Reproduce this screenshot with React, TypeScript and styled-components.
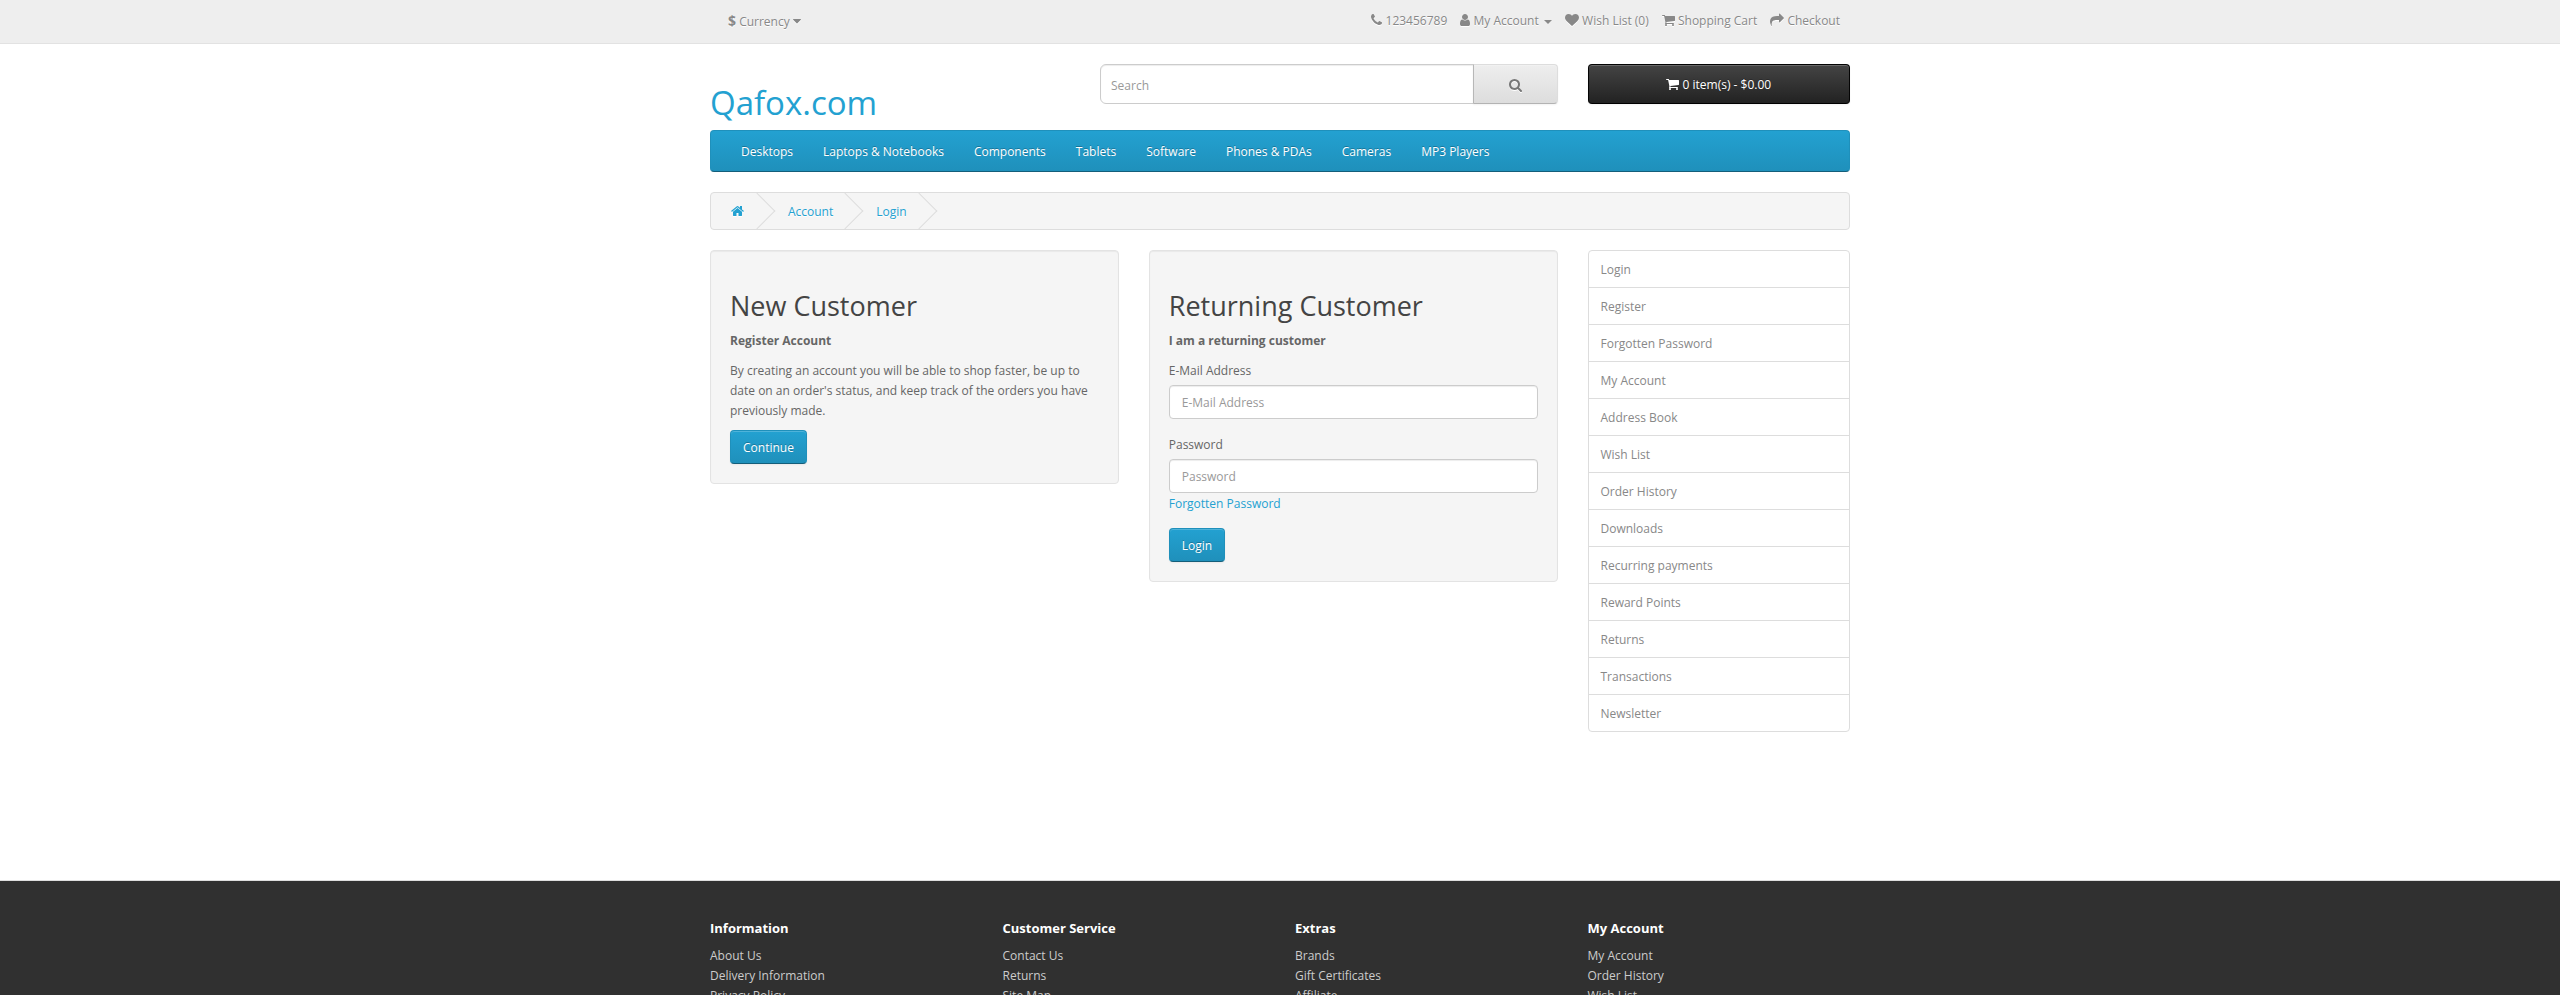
import React from 'react';
import styled, { createGlobalStyle, css } from 'styled-components';

const GlobalStyle = createGlobalStyle`
  *, *::before, *::after { box-sizing: border-box; }
  html, body { margin: 0; padding: 0; height: 995px; overflow: hidden; background: #fff; }
  body, input, button {
    font-family: 'Open Sans', sans-serif;
    font-size: 12px;
    font-weight: 400;
    line-height: 20px;
    color: #666;
  }
  ul { list-style: none; margin: 0; padding: 0; }
  a { color: #23a1d1; text-decoration: none; }
`;

/* Icons: drawn on a 1792 unit em square, cropped to their advance width. */
const glyphs = {
  home: {
    width: 1664,
    d: 'M1472 992v480q0 26-19 45t-45 19h-384v-384h-256v384h-384q-26 0-45-19t-19-45v-480q0-1 .5-3t.5-3l575-474 575 474q1 2 1 6zm223-69l-62 74q-8 9-21 11h-3q-13 0-21-7l-692-577-692 577q-12 8-24 7-13-2-21-11l-62-74q-8-10-7-23.5t11-21.5l719-599q32-26 76-26t76 26l244 204v-195q0-14 9-23t23-9h192q14 0 23 9t9 23v408l219 182q10 8 11 21.5t-7 23.5z',
  },
  search: {
    width: 1664,
    d: 'M1216 832q0-185-131.5-316.5t-316.5-131.5-316.5 131.5-131.5 316.5 131.5 316.5 316.5 131.5 316.5-131.5 131.5-316.5zm512 832q0 52-38 90t-90 38q-54 0-90-38l-343-342q-179 124-399 124-143 0-273.5-55.5t-225-150-150-225-55.5-273.5 55.5-273.5 150-225 225-150 273.5-55.5 273.5 55.5 225 150 150 225 55.5 273.5q0 220-124 399l343 343q37 37 37 90z',
  },
  phone: {
    width: 1408,
    d: 'M1600 1240q0 27-10 70.5t-21 68.5q-21 50-122 106-94 51-186 51-27 0-52.5-3.5t-57.5-12.5-47.5-14.5-55.5-20.5-49-18q-98-35-175-83-128-79-264.5-215.5t-215.5-264.5q-48-77-83-175-3-9-18-49t-20.5-55.5-14.5-47.5-12.5-57.5-3.5-52.5q0-92 51-186 56-101 106-122 25-11 68.5-21t70.5-10q14 0 21 3 18 6 53 76 11 19 30 54t35 63.5 31 53.5q3 4 17.5 25t21.5 35.5 7 28.5q0 20-28.5 50t-62 55-62 53-28.5 46q0 9 5 22.5t8.5 20.5 14 24 11.5 19q76 137 174 235t235 174q2 1 19 11.5t24 14 20.5 8.5 22.5 5q18 0 46-28.5t53-62 55-62 50-28.5q14 0 28.5 7t35.5 21.5 25 17.5q25 15 53.5 31t63.5 35 54 30q70 35 76 53 3 7 3 21z',
  },
  user: {
    width: 1280,
    d: 'M1536 1399q0 109-62.5 187t-150.5 78h-854q-88 0-150.5-78t-62.5-187q0-85 8.5-160.5t31.5-152 58.5-131 94-89 134.5-34.5q131 128 313 128t313-128q76 0 134.5 34.5t94 89 58.5 131 31.5 152 8.5 160.5zm-256-887q0 159-112.5 271.5t-271.5 112.5-271.5-112.5-112.5-271.5 112.5-271.5 271.5-112.5 271.5 112.5 112.5 271.5z',
  },
  heart: {
    width: 1792,
    d: 'M896 1664q-26 0-44-18l-624-602q-10-8-27.5-26t-55.5-65.5-68-97.5-53.5-121-23.5-138q0-220 127-344t351-124q62 0 126.5 21.5t120 58 95.5 68.5 76 68q36-36 76-68t95.5-68.5 120-58 126.5-21.5q224 0 351 124t127 344q0 221-229 450l-623 600q-18 18-44 18z',
  },
  cart: {
    width: 1664,
    d: 'M704 1536q0 52-38 90t-90 38-90-38-38-90 38-90 90-38 90 38 38 90zm896 0q0 52-38 90t-90 38-90-38-38-90 38-90 90-38 90 38 38 90zm128-1088v512q0 24-16.5 42.5t-40.5 21.5l-1044 122q13 60 13 70 0 16-24 64h920q26 0 45 19t19 45-19 45-45 19h-1024q-26 0-45-19t-19-45q0-11 8-31.5t16-36 21.5-40 15.5-29.5l-177-823h-204q-26 0-45-19t-19-45 19-45 45-19h256q16 0 28.5 6.5t19.5 15.5 13 24.5 8 26 5.5 29.5 4.5 26h1201q26 0 45 19t19 45z',
  },
  share: {
    width: 1792,
    d: 'M1792 640q0 26-19 45l-512 512q-19 19-45 19t-45-19-19-45v-256h-224q-98 0-175.5 6t-154 21.5-133 42.5-105.5 69.5-80 101-48.5 138.5-17.5 181q0 55 5 123 0 6 2.5 23.5t2.5 26.5q0 15-8.5 25t-23.5 10q-16 0-28-17-7-9-13-22t-13.5-30-10.5-24q-127-285-127-451 0-199 53-333 162-403 875-403h224v-256q0-26 19-45t45-19 45 19l512 512q19 19 19 45z',
  },
  caret: {
    width: 1024,
    d: 'M1408 704q0 26-19 45l-448 448q-19 19-45 19t-45-19l-448-448q-19-19-19-45t19-45 45-19h896q26 0 45 19t19 45z',
  },
};

const Glyph = styled.svg<{ $drop?: string }>`
  display: inline-block;
  height: 14px;
  vertical-align: -2px;
  fill: currentColor;
  overflow: visible;
  filter: ${({ $drop }) => ($drop ? `drop-shadow(0 1px 0 ${$drop})` : 'none')};
`;

function Icon({ name, drop }: { name: keyof typeof glyphs; drop?: string }) {
  const { width, d } = glyphs[name];
  return (
    <Glyph $drop={drop} width={(width / 1792) * 14} viewBox={`${(1792 - width) / 2} 0 ${width} 1792`} aria-hidden="true">
      <path d={d} />
    </Glyph>
  );
}

const Container = styled.div`
  width: 1140px;
  margin: 0 auto;
`;

const TopBar = styled.nav`
  height: 44px;
  background: #eee;
  border-bottom: 1px solid #e2e2e2;
  margin-bottom: 20px;
`;

const TopInner = styled(Container)`
  display: flex;
  justify-content: space-between;
  align-items: flex-start;
  color: #888;
  text-shadow: 0 1px 0 #fff;
`;

const CurrencyButton = styled.button`
  border: 0;
  background: none;
  color: #888;
  padding: 11px 18px 0;
  text-shadow: 0 1px 0 #fff;
`;

const CurrencySign = styled.strong`
  font-size: 14px;
`;

const TopLinks = styled.ul`
  display: flex;
  gap: 13.1px;
  padding: 11px 10px 0 0;
`;

const TopLink = styled.a`
  color: #888;
`;

const SmallCaret = styled.span`
  display: inline-block;
  margin-left: 2px;
  vertical-align: middle;
  border-top: 4px solid;
  border-right: 4px solid transparent;
  border-left: 4px solid transparent;
`;

const Header = styled.header`
  display: flex;
  height: 66px;
`;

const Logo = styled.h1`
  width: 390px;
  margin: 0;
  padding-top: 21px;
  font-size: 33px;
  font-weight: 400;
  line-height: 36.3px;
`;

const SearchForm = styled.form`
  display: flex;
  width: 457.5px;
  height: 40px;
  margin-right: 30px;
`;

const field = css`
  border: 1px solid #ccc;
  background: #fff;
  color: #555;
  box-shadow: inset 0 1px 1px rgba(0, 0, 0, 0.075);
  outline: none;
  &::placeholder { color: #999; opacity: 1; }
`;

const SearchInput = styled.input`
  ${field}
  flex: 1;
  min-width: 0;
  height: 40px;
  padding: 2px 10px 0;
  border-radius: 6px 0 0 6px;
`;

const buttonBase = css`
  border: 1px solid;
  border-radius: 4px;
  box-shadow: inset 0 1px 0 rgba(255, 255, 255, 0.2), 0 1px 2px rgba(0, 0, 0, 0.05);
`;

const SearchButton = styled.button`
  ${buttonBase}
  width: 85px;
  height: 40px;
  margin-left: -1px;
  padding: 4px 0 0;
  color: #777;
  background: linear-gradient(to bottom, #eee, #ddd);
  border-color: #ddd #ddd #b3b3b3 #b7b7b7;
  border-radius: 0 4px 4px 0;
`;

const CartButton = styled.button`
  ${buttonBase}
  width: 262.5px;
  height: 40px;
  padding: 2px 0 0;
  color: #fff;
  background: linear-gradient(to bottom, #444, #222);
  border-color: #040404 #040404 #000;
  text-shadow: 0 -1px 0 rgba(0, 0, 0, 0.25);
`;

const Menu = styled.nav`
  display: flex;
  height: 42px;
  padding: 0 15px;
  margin-bottom: 20px;
  background: linear-gradient(to bottom, #23a1d1, #1f90bb);
  border: 1px solid;
  border-color: #1f90bb #1f90bb #145e7a;
  border-radius: 4px;
`;

const MenuLink = styled.a`
  padding: 11px 15px 9px;
  color: #fff;
  text-shadow: 0 -1px 0 rgba(0, 0, 0, 0.25);
`;

const Breadcrumb = styled.ul`
  display: flex;
  gap: 3.12px;
  height: 38px;
  padding: 9px 0 7px;
  margin-bottom: 20px;
  overflow: hidden;
  background: #f5f5f5;
  border: 1px solid #ddd;
  border-radius: 4px;
`;

const Crumb = styled.li`
  position: relative;
  padding: 0 20px;
  text-shadow: 0 1px 0 #fff;
  white-space: nowrap;
  &:first-child { padding-right: 20.8px; }
  &::after {
    content: '';
    position: absolute;
    top: -4px;
    right: -5px;
    width: 26px;
    height: 26px;
    border-right: 1px solid #ddd;
    border-bottom: 1px solid #ddd;
    transform: rotate(-45deg);
  }
`;

const Columns = styled.div`
  display: grid;
  grid-template-columns: 408.75px 408.75px 262.5px;
  column-gap: 30px;
  align-items: start;
  height: 630px;
`;

const Well = styled.section`
  padding: 19px;
  background: #f5f5f5;
  border: 1px solid #e3e3e3;
  border-radius: 4px;
  box-shadow: inset 0 1px 1px rgba(0, 0, 0, 0.05);
`;

const Title = styled.h2`
  margin: 21px 0 10px;
  font-size: 27px;
  font-weight: 400;
  line-height: 1.1;
  color: #444;
`;

const Text = styled.p`
  margin: 0 0 10px;
`;

const Intro = styled(Text)`
  margin-bottom: 9px;
`;

const PrimaryButton = styled.button`
  ${buttonBase}
  display: block;
  height: 34px;
  padding: 2px 12px 0;
  color: #fff;
  background: linear-gradient(to bottom, #23a1d1, #1f90bb);
  border-color: #1f90bb #1f90bb #145e7a;
  text-shadow: 0 -1px 0 rgba(0, 0, 0, 0.25);
`;

const FormGroup = styled.div`
  margin-bottom: 16px;
  &:last-of-type { margin-bottom: 14px; }
`;

const Label = styled.label`
  display: block;
  margin-bottom: 4px;
`;

const TextInput = styled.input`
  ${field}
  display: block;
  width: 100%;
  height: 34px;
  padding: 7px 12px 5px;
  border-radius: 4px;
`;

const HelpLink = styled.a`
  display: block;
  margin-top: 1px;
`;

const SideList = styled.nav`
  border: 1px solid #ddd;
  border-radius: 4px;
`;

const SideLink = styled.a`
  display: block;
  height: 37px;
  padding: 9px 12px 7px;
  color: #888;
  border-bottom: 1px solid #ddd;
  &:last-child { height: 36px; border-bottom: 0; }
`;

const Footer = styled.footer`
  height: 115px;
  padding-top: 30px;
  overflow: hidden;
  background: #303030;
  border-top: 1px solid #ddd;
`;

const FooterColumns = styled(Container)`
  display: grid;
  grid-template-columns: repeat(4, 292.5px);
`;

const FooterTitle = styled.h5`
  margin: 10px 0 11px;
  font-size: 13px;
  font-weight: 700;
  line-height: 1.1;
  color: #fff;
`;

const FooterLink = styled.a`
  display: block;
  color: #ccc;
`;

const categories = ['Desktops', 'Laptops & Notebooks', 'Components', 'Tablets', 'Software', 'Phones & PDAs', 'Cameras', 'MP3 Players'];

const accountLinks = [
  'Login', 'Register', 'Forgotten Password', 'My Account', 'Address Book', 'Wish List', 'Order History',
  'Downloads', 'Recurring payments', 'Reward Points', 'Returns', 'Transactions', 'Newsletter',
];

const footerColumns = [
  { title: 'Information', links: ['About Us', 'Delivery Information', 'Privacy Policy'] },
  { title: 'Customer Service', links: ['Contact Us', 'Returns', 'Site Map'] },
  { title: 'Extras', links: ['Brands', 'Gift Certificates', 'Affiliate'] },
  { title: 'My Account', links: ['My Account', 'Order History', 'Wish List'] },
];

export default function App() {
  return (
    <>
      <GlobalStyle />
      <TopBar>
        <TopInner>
          <CurrencyButton>
            <CurrencySign>$</CurrencySign> Currency <Icon name="caret" drop="#fff" />
          </CurrencyButton>
          <TopLinks>
            <li><TopLink><Icon name="phone" drop="#fff" /></TopLink> 123456789</li>
            <li><TopLink><Icon name="user" drop="#fff" /> My Account <SmallCaret /></TopLink></li>
            <li><TopLink><Icon name="heart" drop="#fff" /> Wish List (0)</TopLink></li>
            <li><TopLink><Icon name="cart" drop="#fff" /> Shopping Cart</TopLink></li>
            <li><TopLink><Icon name="share" drop="#fff" /> Checkout</TopLink></li>
          </TopLinks>
        </TopInner>
      </TopBar>

      <Container>
        <Header>
          <Logo><a>Qafox.com</a></Logo>
          <SearchForm>
            <SearchInput placeholder="Search" />
            <SearchButton type="button"><Icon name="search" drop="#fff" /></SearchButton>
          </SearchForm>
          <CartButton><Icon name="cart" /> 0 item(s) - $0.00</CartButton>
        </Header>

        <Menu>
          {categories.map((name) => <MenuLink key={name}>{name}</MenuLink>)}
        </Menu>

        <Breadcrumb>
          <Crumb><a><Icon name="home" drop="#fff" /></a></Crumb>
          <Crumb><a>Account</a></Crumb>
          <Crumb><a>Login</a></Crumb>
        </Breadcrumb>

        <Columns>
          <Well>
            <Title>New Customer</Title>
            <Text><strong>Register Account</strong></Text>
            <Intro>
              By creating an account you will be able to shop faster, be up to date on an order's status,
              and keep track of the orders you have previously made.
            </Intro>
            <PrimaryButton>Continue</PrimaryButton>
          </Well>

          <Well>
            <Title>Returning Customer</Title>
            <Text><strong>I am a returning customer</strong></Text>
            <FormGroup>
              <Label htmlFor="email">E-Mail Address</Label>
              <TextInput id="email" placeholder="E-Mail Address" />
            </FormGroup>
            <FormGroup>
              <Label htmlFor="password">Password</Label>
              <TextInput id="password" type="password" placeholder="Password" />
              <HelpLink>Forgotten Password</HelpLink>
            </FormGroup>
            <PrimaryButton>Login</PrimaryButton>
          </Well>

          <SideList>
            {accountLinks.map((name) => <SideLink key={name}>{name}</SideLink>)}
          </SideList>
        </Columns>
      </Container>

      <Footer>
        <FooterColumns>
          {footerColumns.map(({ title, links }) => (
            <div key={title}>
              <FooterTitle>{title}</FooterTitle>
              {links.map((link) => <FooterLink key={link}>{link}</FooterLink>)}
            </div>
          ))}
        </FooterColumns>
      </Footer>
    </>
  );
}
